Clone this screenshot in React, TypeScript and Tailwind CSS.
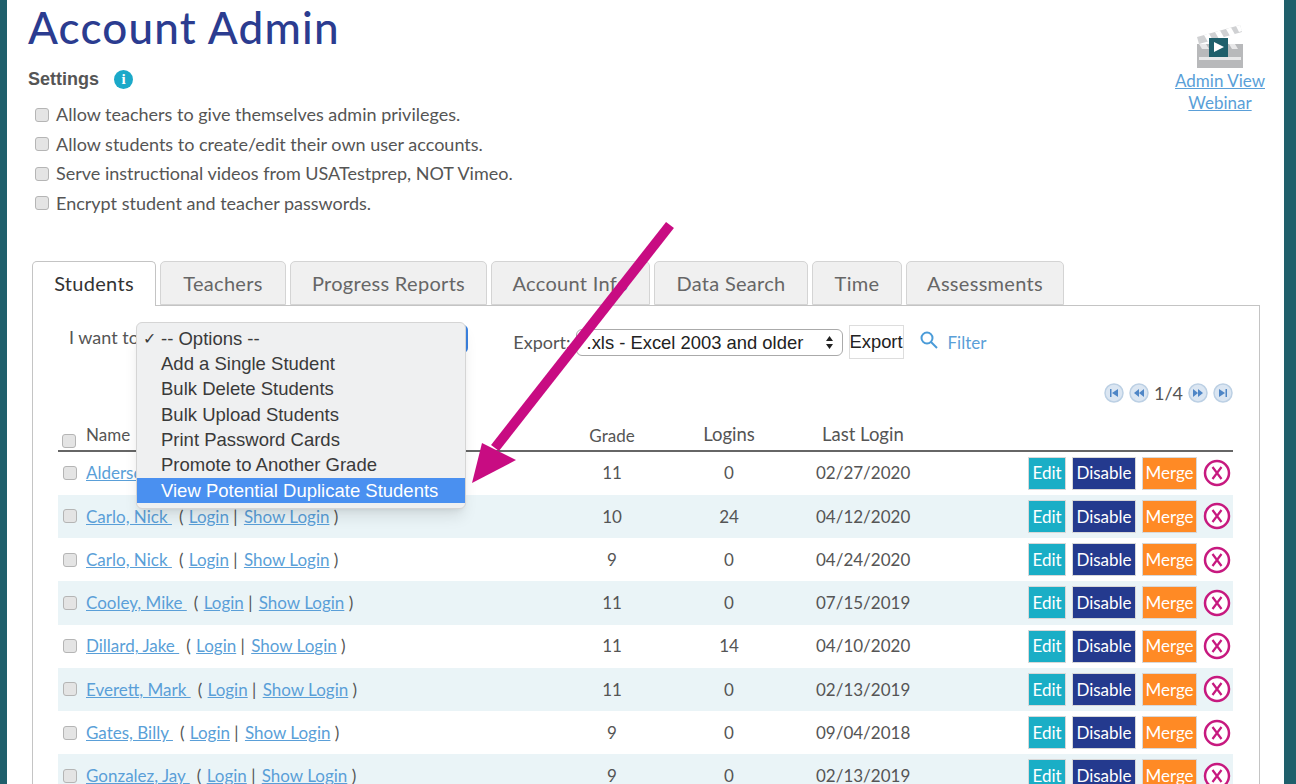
const settings = [
  "Allow teachers to give themselves admin privileges.",
  "Allow students to create/edit their own user accounts.",
  "Serve instructional videos from USATestprep, NOT Vimeo.",
  "Encrypt student and teacher passwords.",
];

const tabs = [
  { label: "Students", width: "w-[124px]" },
  { label: "Teachers", width: "w-[126px]" },
  { label: "Progress Reports", width: "w-[197px]" },
  { label: "Account Info", width: "w-[159px]" },
  { label: "Data Search", width: "w-[154px]" },
  { label: "Time", width: "w-[90px]" },
  { label: "Assessments", width: "w-[158px]" },
];

const menuItems = [
  "Add a Single Student",
  "Bulk Delete Students",
  "Bulk Upload Students",
  "Print Password Cards",
  "Promote to Another Grade",
];

const students = [
  { name: "Alderson, Amy", grade: 11, logins: 0, last: "02/27/2020" },
  { name: "Carlo, Nick", grade: 10, logins: 24, last: "04/12/2020" },
  { name: "Carlo, Nick", grade: 9, logins: 0, last: "04/24/2020" },
  { name: "Cooley, Mike", grade: 11, logins: 0, last: "07/15/2019" },
  { name: "Dillard, Jake", grade: 11, logins: 14, last: "04/10/2020" },
  { name: "Everett, Mark", grade: 11, logins: 0, last: "02/13/2019" },
  { name: "Gates, Billy", grade: 9, logins: 0, last: "09/04/2018" },
  { name: "Gonzalez, Jay", grade: 9, logins: 0, last: "02/13/2019" },
];

function Box() {
  return <span className="block h-[14px] w-[14px] shrink-0 rounded-[3px] border border-[#b5b5b5] bg-[#e4e4e4]" />;
}

function Clapper() {
  return (
    <svg width="50" height="46" viewBox="0 0 50 46">
      <path d="M2 13 45 1l2 7L4 20z" fill="#d0d1d3" />
      <path d="M9 11l4 7 5-1.5-4-7zM20 8l4 7 5-1.5-4-7zM31 5l4 7 5-1.5-4-7zM41 2l3 6 3-1-2-6z" fill="#fff" />
      <rect x="2" y="20" width="46" height="24" fill="#b8b9bb" />
      <path d="M4 20h7l3 5H7zM18 20h6l3 5h-6zM34 20h6l3 5h-6z" fill="#e8e8e9" />
      <rect x="4" y="33" width="42" height="3" fill="#e8e8e9" />
      <rect x="14" y="14" width="19" height="19" fill="#1f5f6b" />
      <path d="M19 18l10 5-10 5z" fill="#fff" />
    </svg>
  );
}

function PagerIcon({ d }: { d: string }) {
  return (
    <svg width="20" height="20" viewBox="0 0 20 20">
      <circle cx="10" cy="10" r="9" fill="#dbe6f2" stroke="#bcd0e4" strokeWidth="1.5" />
      <path d={d} fill="#4f86c6" />
    </svg>
  );
}

function Row({ s, striped }: { s: (typeof students)[number]; striped: boolean }) {
  return (
    <div className={striped ? "flex h-[43.25px] items-center bg-[#eaf4f7]" : "flex h-[43.25px] items-center"}>
      <div className="flex w-[504px] items-center pl-[5px]">
        <Box />
        <a href="#" className="ml-[9px] whitespace-pre text-[#5a9fd8] underline">{s.name + " "}</a>
        <span className="ml-[7px] whitespace-pre">
          {"( "}
          <a href="#" className="ml-[1px] text-[#5a9fd8] underline">Login</a>
          {" | "}
          <a href="#" className="ml-[2px] text-[#5a9fd8] underline">Show Login</a>
          {" )"}
        </span>
      </div>
      <div className="w-[100px] text-center">{s.grade}</div>
      <div className="w-[134px] text-center">{s.logins}</div>
      <div className="w-[120px] pl-[20px]">{s.last}</div>
      <div className="ml-auto flex items-center gap-[6px]">
        <button className="h-[33px] w-[38px] border border-[#d8d8d8] bg-[#1aaec6] text-white">Edit</button>
        <button className="h-[33px] w-[64px] border border-[#d8d8d8] bg-[#243a8e] text-white">Disable</button>
        <button className="h-[33px] w-[55px] border border-[#d8d8d8] bg-[#ff8a25] text-white">Merge</button>
        <svg width="28" height="28" viewBox="0 0 28 28" className="mr-[2px]">
          <circle cx="14" cy="14" r="12" fill="#fff" stroke="#c7197f" strokeWidth="2.5" />
          <path d="M9.5 8l9 12M18.5 8l-9 12" stroke="#c7197f" strokeWidth="2.2" />
        </svg>
      </div>
    </div>
  );
}

export default function App() {
  return (
    <div className="relative flex h-[784px] w-[1296px] overflow-hidden bg-white font-['Lato',sans-serif] text-[17px] text-[#555]">
      <div className="w-[7px] shrink-0 bg-[#1f5f6b]" />

      <div className="relative flex-1 pl-[21px] pr-[20px]">
        <div className="flex justify-between">
          <div>
            <h1 className="h-[58px] text-[44px] font-medium leading-[55px] tracking-[1.2px] text-[#2b3c90]">Account Admin</h1>
            <div className="flex h-[42px] items-center">
              <span className="font-['Liberation_Sans',sans-serif] text-[18px] font-bold">Settings</span>
              <span className="ml-[15px] flex h-[19px] w-[19px] items-center justify-center rounded-full bg-[#1ba9c9] font-['Liberation_Serif',serif] text-[15px] font-bold text-white">i</span>
            </div>
            {settings.map((label) => (
              <div key={label} className="flex h-[29.5px] items-center pl-[7px]">
                <Box />
                <span className="ml-[7px] text-[18px]">{label}</span>
              </div>
            ))}
          </div>
          <div className="flex w-[88px] flex-col items-center whitespace-nowrap pt-[24px] text-center leading-[22px]">
            <Clapper />
            <a href="#" className="text-[#5a9fd8] underline">Admin View</a>
            <a href="#" className="text-[#5a9fd8] underline">Webinar</a>
          </div>
        </div>

        <div className="mt-[43px] ml-[4px] mr-[4px]">
          <div className="relative z-10 flex h-[45px] gap-[4px] text-[20px] tracking-[0.3px]">
            {tabs.map((t, i) => (
              <div
                key={t.label}
                className={
                  i === 0
                    ? t.width + " flex h-[45px] items-center justify-center rounded-t-[5px] border border-b-0 border-[#c4c4c4] bg-white pb-[2px] text-[#333]"
                    : t.width + " flex h-[44px] items-center justify-center rounded-t-[5px] border border-[#d4d4d4] bg-[#f0f0f0] pb-[1px] text-[#666]"
                }
              >
                {t.label}
              </div>
            ))}
          </div>

          <div className="relative -mt-px h-[500px] border border-[#c4c4c4] pl-[25px] pr-[26px]">
            <div className="flex h-[70px] items-start">
              <span className="ml-[11px] mt-[18px] text-[18px]">I want to</span>
              <div className="ml-[41.5px] mt-[19px] h-[28px] w-[288px] rounded-[5px] bg-[#3b82e0]" />
              <span className="ml-[45px] mt-[23px] text-[18px]">Export:</span>
              <div className="ml-[5px] mt-[23px] flex h-[27px] w-[267px] items-center justify-between rounded-[6px] border border-[#aaa] bg-white pl-[10px] pr-[8px] font-['Liberation_Sans',sans-serif] text-[18.4px] text-[#222]">
                <span>.xls - Excel 2003 and older</span>
                <svg width="9" height="15" viewBox="0 0 9 15"><path d="M4.5 1 8 6H1zM4.5 14 1 9h7z" fill="#222" /></svg>
              </div>
              <div className="ml-[6px] mt-[19px] flex h-[34px] w-[55px] items-center justify-center border border-[#ddd] font-['Liberation_Sans',sans-serif] text-[18.4px] text-[#222]">Export</div>
              <svg width="18" height="18" viewBox="0 0 18 18" className="ml-[16px] mt-[25px]" fill="none" stroke="#4a9bd8" strokeWidth="2">
                <circle cx="7" cy="7" r="5.5" />
                <path d="M11 11l6 6" />
              </svg>
              <span className="ml-[10px] mt-[24px] text-[#5a9fd8]">Filter</span>
            </div>

            <div className="flex h-[34px] items-center justify-end gap-[5px]">
              <PagerIcon d="M6 6h1.5v8H6zM14 6v8l-6-4z" />
              <PagerIcon d="M10 6v8l-5-4zM15 6v8l-5-4z" />
              <span className="text-[18px]">1/4</span>
              <PagerIcon d="M5 6v8l5-4zM10 6v8l5-4z" />
              <PagerIcon d="M6 6v8l6-4zM12.5 6H14v8h-1.500z" />
            </div>

            <div className="flex h-[41.5px] items-center border-b-2 border-[#666] pt-[11px]">
              <div className="flex w-[504px] items-center pl-[4px]">
                <span className="mt-[11px]">
                  <Box />
                </span>
                <span className="ml-[10px] -mt-[1px]">Name</span>
              </div>
              <div className="w-[100px] text-center">Grade</div>
              <div className="w-[134px] text-center text-[18.5px]">Logins</div>
              <div className="w-[120px] whitespace-nowrap pl-[26px] text-[18.5px]">Last Login</div>
            </div>

            {students.map((s, i) => (
              <Row key={i} s={s} striped={i % 2 === 1} />
            ))}

            <div className="absolute left-[103px] top-[16px] z-20 w-[330px] rounded-[6px] border border-[#d5d5d5] bg-[#eff0f1] pb-[5px] pt-[3px] font-['Liberation_Sans',sans-serif] text-[18.5px] text-[#3a3a3a] shadow-lg">
              <div className="flex h-[25.3px] items-center">
                <span className="w-[24px] pl-[6px] text-[16px]">✓</span>
                <span>-- Options --</span>
              </div>
              {menuItems.map((m) => (
                <div key={m} className="flex h-[25.3px] items-center pl-[24px]">{m}</div>
              ))}
              <div className="flex h-[25.3px] items-center bg-[#4a90f0] pl-[24px] text-white">View Potential Duplicate Students</div>
            </div>
          </div>
        </div>
      </div>

      <div className="w-[12px] shrink-0 bg-[#1f5f6b]" />

      <svg className="absolute left-0 top-0 z-30" width="1296" height="784" viewBox="0 0 1296 784">
        <path d="M670 225 495 448" stroke="#c80c82" strokeWidth="10" fill="none" />
        <path d="M472 483 482 443 516 460z" fill="#c80c82" />
      </svg>
    </div>
  );
}
